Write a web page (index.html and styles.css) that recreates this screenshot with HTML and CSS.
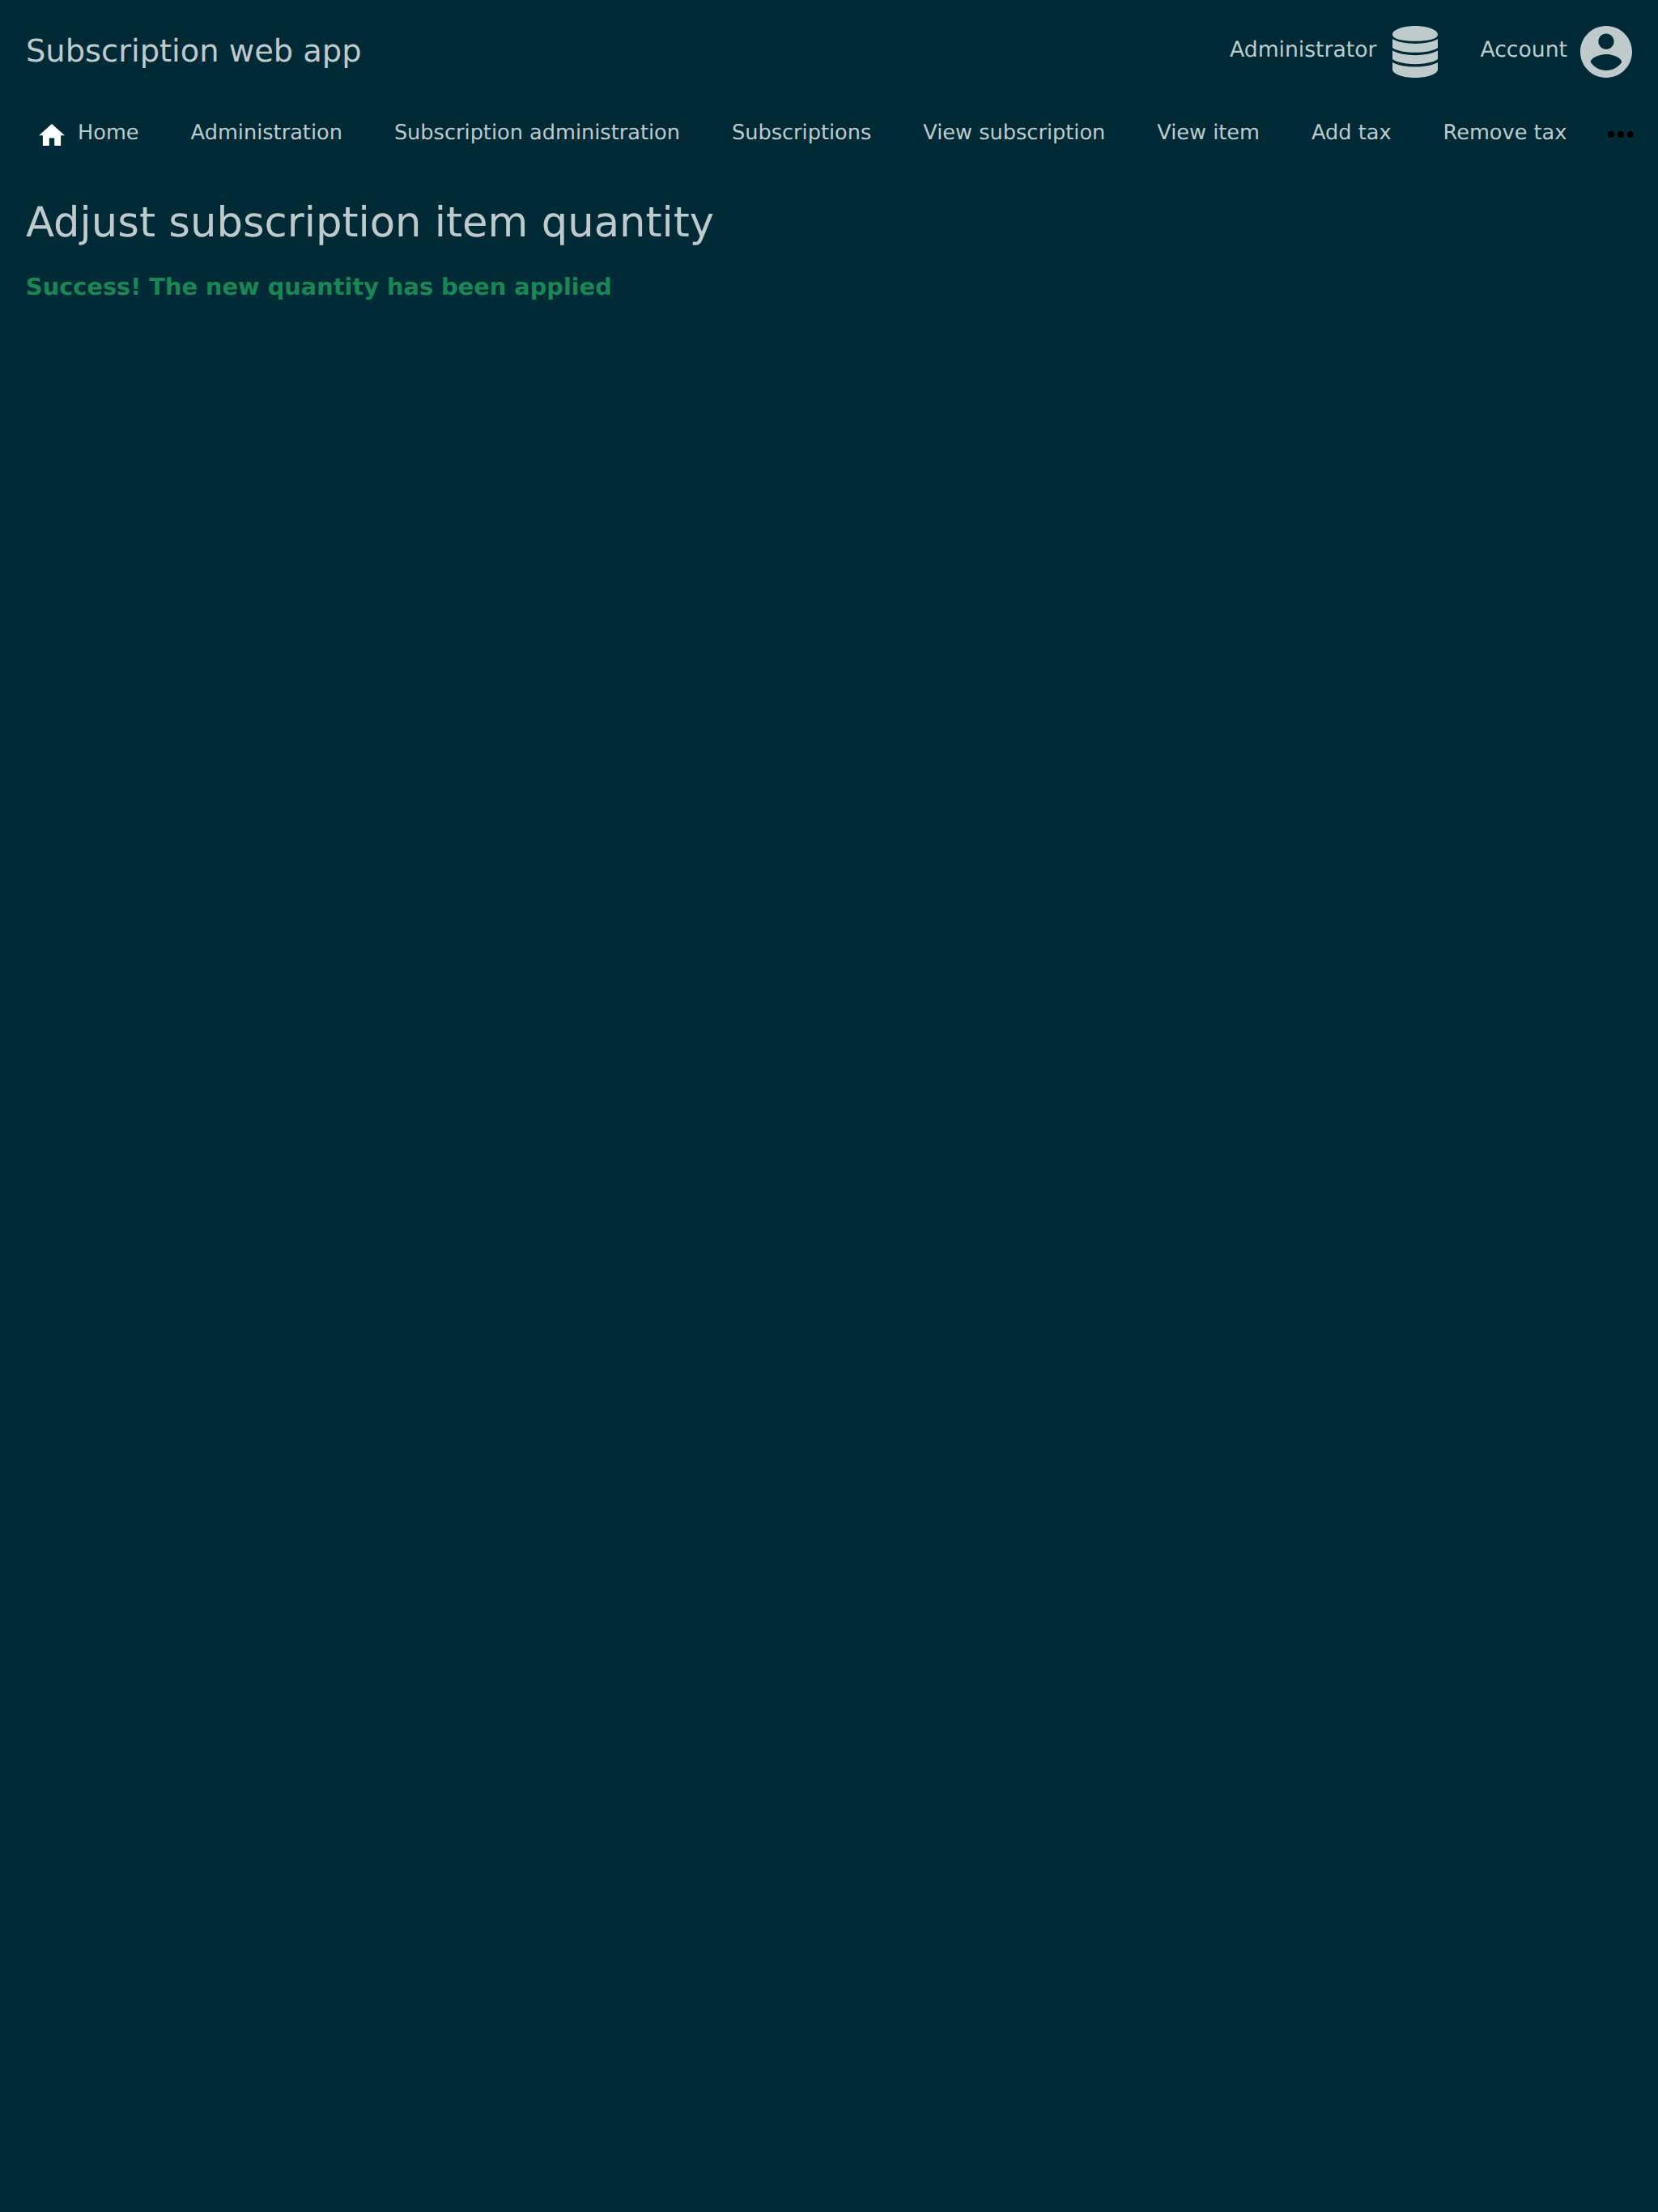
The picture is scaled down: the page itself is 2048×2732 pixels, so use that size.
FILE: index.html
```html
<!DOCTYPE html>
<html lang="en">
<head>
<meta charset="utf-8">
<title>Subscription web app</title>
<link rel="stylesheet" href="styles.css">
</head>
<body>
<header class="header">
  <div class="brand">Subscription web app</div>
  <div class="menus">
    <a class="menu"><span class="menu-label">Administrator</span>
      <svg class="menu-icon" viewBox="0 0 64 64"><path d="M32 0C46 0 60 4.500 60 10.500S47 18.800 32 18.800 4 16.500 4 10.500 18 0 32 0zM4 16.300C11 20.100 21 21.900 32 21.900S53 20.100 60 16.300V27C55 31 43 32.800 32 32.800S9 31 4 27zM4 30.600C11 34.400 21 36.200 32 36.200S53 34.400 60 30.600V41C55 45 43 47.200 32 47.200S9 45 4 41zM4 44.900C11 48.700 21 50.500 32 50.500S53 48.700 60 44.900V53.500C60 59.500 47 64 32 64S4 59.500 4 53.500z"/></svg>
    </a>
    <a class="menu"><span class="menu-label">Account</span>
      <svg class="menu-icon" viewBox="2 2 20 20"><path d="M12 2C6.480 2 2 6.480 2 12s4.480 10 10 10 10-4.480 10-10S17.520 2 12 2zm0 3c1.660 0 3 1.340 3 3s-1.340 3-3 3-3-1.340-3-3 1.340-3 3-3zm0 14.200c-2.500 0-4.710-1.280-6-3.220.030-1.990 4-3.080 6-3.080 1.990 0 5.970 1.090 6 3.080-1.290 1.940-3.500 3.220-6 3.220z"/></svg>
    </a>
  </div>
</header>
<nav class="nav">
  <a class="nav-item"><svg class="home-icon" viewBox="2 3 20 17"><path d="M10 20v-6h4v6h5v-8h3L12 3 2 12h3v8z"/></svg>Home</a>
  <a class="nav-item">Administration</a>
  <a class="nav-item">Subscription administration</a>
  <a class="nav-item">Subscriptions</a>
  <a class="nav-item">View subscription</a>
  <a class="nav-item">View item</a>
  <a class="nav-item">Add tax</a>
  <a class="nav-item">Remove tax</a>
  <svg class="more-icon" viewBox="0 0 32 8"><circle cx="4" cy="4" r="4"/><circle cx="16" cy="4" r="4"/><circle cx="28" cy="4" r="4"/></svg>
</nav>
<main class="content">
  <h1 class="title">Adjust subscription item quantity</h1>
  <p class="success">Success! The new quantity has been applied</p>
</main>
</body>
</html>
```
FILE: styles.css
```css
body {
  margin: 0;
  min-height: 2732px;
  background: #002b36;
  color: #bfcacd;
  font-family: "DejaVu Sans", sans-serif;
  text-rendering: geometricPrecision;
}
.header {
  box-sizing: border-box;
  display: flex;
  justify-content: space-between;
  height: 128px;
  padding: 32px 32px 0;
}
.brand { padding-top: 9px; font-size: 38.4px; line-height: 45px; }
.menus { display: flex; gap: 48px; }
.menu { display: flex; align-items: flex-start; gap: 16px; font-size: 26.63px; line-height: 31px; }
.menu-label { padding-top: 14px; }
.menu-icon { width: 64px; height: 64px; fill: currentColor; }
.nav {
  box-sizing: border-box;
  display: flex;
  align-items: flex-start;
  height: 72px;
  padding: 21px 30px 0 48px;
  font-size: 25.6px;
  line-height: 30px;
}
.nav-item { display: flex; flex: none; margin-right: 64px; white-space: nowrap; }
.nav-item:nth-last-child(2) { margin-right: 0; }
.home-icon { width: 32px; height: 27px; margin: 4px 16px 0 0; fill: #fff; }
.more-icon { width: 32px; height: 8px; margin: 13px 0 0 auto; fill: #000; }
.content { padding: 45px 32px 0; }
.title { margin: 0; font-size: 51.2px; font-weight: 400; line-height: 60px; }
.success { margin: 32px 0 0; font-size: 28.8px; font-weight: 700; line-height: 34px; color: #198754; }
```
